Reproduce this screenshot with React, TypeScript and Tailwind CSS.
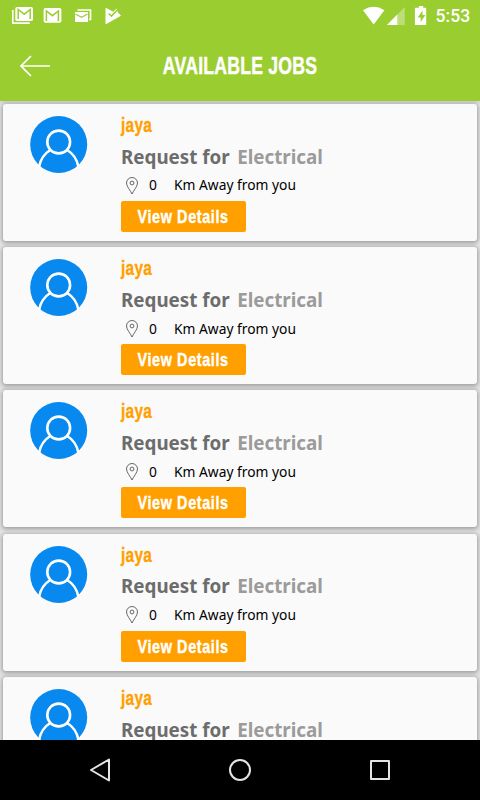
const jobs = [
  { id: 1, name: "jaya", service: "Electrical", distance: 0 },
  { id: 2, name: "jaya", service: "Electrical", distance: 0 },
  { id: 3, name: "jaya", service: "Electrical", distance: 0 },
  { id: 4, name: "jaya", service: "Electrical", distance: 0 },
  { id: 5, name: "jaya", service: "Electrical", distance: 0 },
];

type Job = (typeof jobs)[number];

function StatusBar() {
  return (
    <div className="flex h-8 shrink-0 items-start justify-between text-white">
      {/* Notifications */}
      <svg width="130" height="32" viewBox="0 0 130 32" fill="none">
        <path d="M12.8 10v13.2h17" stroke="currentColor" strokeWidth="1.7" strokeLinejoin="round" />
        <rect x="15.3" y="7" width="17.7" height="14" rx="1.8" fill="currentColor" />
        <path d="M18.2 19V9.5l6 4.7 6-4.7V19" stroke="#9acd2f" strokeWidth="1.5" />
        <rect x="43.6" y="8" width="17.8" height="14.8" rx="1.8" fill="currentColor" />
        <path d="M46.4 21V11l6 4.7 6-4.7V21" stroke="#9acd2f" strokeWidth="1.5" />
        <path d="M77.5 10h13v9.5H89" stroke="currentColor" strokeWidth="1.7" />
        <rect x="75" y="12" width="13" height="10" fill="currentColor" />
        <path d="M75.5 14l6 3.3 6-3.3" stroke="#9acd2f" strokeWidth="1.1" />
        <path d="M106.3 8l7 3.8 3.3-3.3 1.4 4 3 3.2-14.7 8.3q-.8.4-.8-.5V8.6q0-.8.8-.6z" fill="currentColor" />
        <path d="M108.7 13.5l2.8 2.6 5.8-6.1" stroke="#9acd2f" strokeWidth="1.5" />
      </svg>
      <div className="flex">
        <svg width="75" height="32" viewBox="0 0 75 32">
          <path d="M8 10.2Q18.7 3.5 29.4 10.2L18.7 24.6z" fill="currentColor" />
          <path d="M49.7 7v18H32z" fill="currentColor" opacity=".35" />
          <path d="M42.3 14.5V25H32z" fill="currentColor" />
          <path d="M63.9 6h4.3v1.8h2.3q.7 0 .7.7v15.8q0 .7-.7.7h-9.9q-.7 0-.7-.7V8.5q0-.7.7-.7h3.3z" fill="currentColor" />
          <path d="M67.5 10.5l-4.8 7h3v4.5l4.7-7h-2.9z" fill="#9acd2f" />
        </svg>
        <span className="w-[50px] pl-[5.5px] font-['Roboto',sans-serif] text-[17.6px] leading-[33px] font-medium">
          5:53
        </span>
      </div>
    </div>
  );
}

function Header() {
  return (
    <header className="z-10 flex h-[101px] shrink-0 flex-col bg-[#9acd2f] shadow-[0_1px_3px_rgba(0,0,0,0.15)]">
      <StatusBar />
      <div className="grid h-[68px] grid-cols-[80px_1fr_80px] items-center">
        <button aria-label="Back" className="ml-5 w-[31px] text-white">
          <svg width="31" height="22" viewBox="0 0 31 22" fill="none" stroke="currentColor" strokeWidth="1.7">
            <path d="M30 11H1M11 1L1 11l10 10" />
          </svg>
        </button>
        <h1 className="scale-x-[0.72] text-center font-['Liberation_Sans',sans-serif] text-[24.5px] leading-[28px] font-bold tracking-[0.3px] whitespace-nowrap text-white [-webkit-text-stroke:0.5px_#fff]">
          AVAILABLE JOBS
        </h1>
      </div>
    </header>
  );
}

function Avatar() {
  return (
    <svg className="mt-3 ml-[27px] shrink-0" width="58" height="58" viewBox="0 0 58 58">
      <circle cx="28.7" cy="28.5" r="28.5" fill="#0789ef" />
      <g fill="none" stroke="#fff" strokeWidth="2.6">
        <circle cx="28.7" cy="26" r="11.4" />
        <path d="M9 51C10.5 43 14.5 37.5 20.3 34M37.1 34C43 37.5 47 43 48.5 51" />
      </g>
    </svg>
  );
}

function JobCard({ job }: { job: Job }) {
  return (
    <div className="flex h-[137px] shrink-0 rounded-[3px] bg-[#fafafa] shadow-[0_1px_4px_1px_rgba(0,0,0,0.32)]">
      <Avatar />
      <div className="ml-[33px] flex flex-col items-start pt-[7px]">
        <h2 className="origin-left scale-x-[0.77] font-['Liberation_Sans',sans-serif] text-[20px] leading-[28px] font-bold tracking-[0.4px] text-[#ffa000] [-webkit-text-stroke:0.3px_#ffa000]">
          {job.name}
        </h2>
        <div className="mb-px flex h-9 items-center gap-[7.5px] font-['Noto_Sans',sans-serif] text-[18.8px] font-bold">
          <span className="text-[#6c6c6c]">Request for</span>
          <span className="text-[#9b9b9b]">{job.service}</span>
        </div>
        <div className="mb-[6px] flex h-[19px] items-center font-['Noto_Sans',sans-serif] text-[13.8px] text-black">
          <svg className="ml-[5px] w-[12px]" height="18" viewBox="0 0 12 18" fill="none" stroke="#444" strokeWidth=".8">
            <path d="M6 17C4.5 13.5.5 9.5.5 6a5.5 5.5 0 0 1 11 0C11.5 9.5 7.5 13.5 6 17z" />
            <circle cx="6" cy="6" r="1.9" />
          </svg>
          <span className="ml-[11px] w-[25px]">{job.distance}</span>
          <span>Km Away from you</span>
        </div>
        <button className="h-[31px] w-[125px] rounded-[2px] bg-[#ffa000] pt-px font-['Liberation_Sans',sans-serif] text-[19px] leading-[30px] font-bold text-white">
          <span className="inline-block scale-x-[0.76] tracking-[0.8px] whitespace-nowrap [-webkit-text-stroke:0.4px_#fff]">
            View Details
          </span>
        </button>
      </div>
    </div>
  );
}

function NavBar() {
  return (
    <nav className="z-10 flex h-[60px] shrink-0 items-center justify-around bg-black px-[30px]">
      <svg width="24" height="26" viewBox="0 0 24 26" fill="none" stroke="#e4e4e4" strokeWidth="2" strokeLinejoin="round">
        <path d="M21 2.5v21L3 13z" />
      </svg>
      <svg width="24" height="24" viewBox="0 0 24 24" fill="none" stroke="#e4e4e4" strokeWidth="2">
        <circle cx="12" cy="12" r="10" />
      </svg>
      <svg width="24" height="24" viewBox="0 0 24 24" fill="none" stroke="#e4e4e4" strokeWidth="2" strokeLinejoin="round">
        <rect x="3" y="3" width="18" height="18" />
      </svg>
    </nav>
  );
}

export default function App() {
  return (
    <div className="flex h-[800px] w-[480px] flex-col overflow-hidden bg-[#e4e4e4]">
      <Header />
      <main className="flex min-h-0 flex-1 flex-col gap-[6.1px] overflow-hidden px-[3px] pt-[3.3px]">
        {jobs.map((job) => (
          <JobCard key={job.id} job={job} />
        ))}
      </main>
      <NavBar />
    </div>
  );
}
